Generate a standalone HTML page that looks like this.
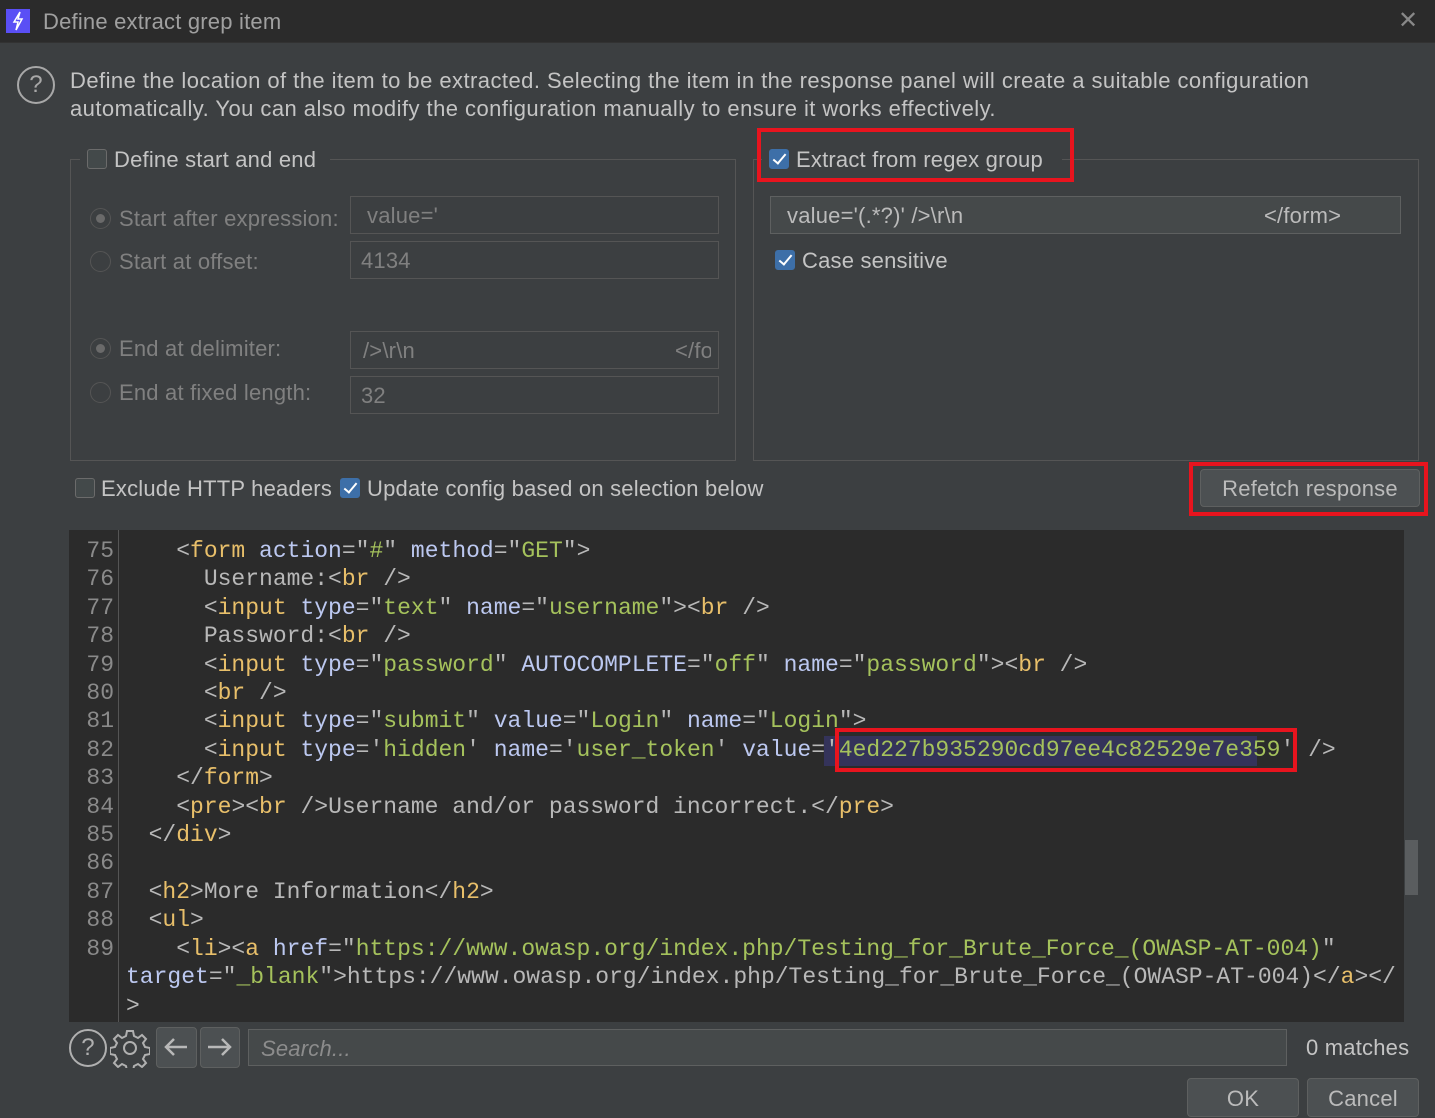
<!DOCTYPE html>
<html><head><meta charset="utf-8"><style>
*{box-sizing:border-box;margin:0;padding:0}
body{width:1435px;height:1117px;background:#3c3f41;font-family:"Liberation Sans",sans-serif;color:#bbbbbb;position:relative;overflow:hidden;font-size:22px;letter-spacing:0.2px}
.a{position:absolute;white-space:nowrap}
.title{left:0;top:0;width:1435px;height:43px;background:#2b2b2b;border-bottom:1px solid #323232}
.fld{position:absolute;border:1px solid #5e6060;background:#45494a;height:38px;padding:0 16px;line-height:38px;color:#bbbbbb}
.dis{color:#808080;background:#3c3f41;border-color:#555}
.cb{position:absolute;width:20px;height:20px;border:1px solid #6b6b6b;border-radius:3px;background:#43494a}
.cb.on{background:#3d6fa8;border-color:#3d6fa8}
.cb.on:after{content:"";position:absolute;left:6px;top:1px;width:5px;height:11px;border:solid #fff;border-width:0 2.5px 2.5px 0;transform:rotate(40deg)}
.rad{position:absolute;width:21px;height:21px;border-radius:50%;border:1px solid #555;background:#3c3f41}
.rad.on:after{content:"";position:absolute;left:5px;top:5px;width:9px;height:9px;border-radius:50%;background:#6a6a6a}
.grp{position:absolute;border:1px solid #555}
.red{position:absolute;border:4px solid #e8141e}
.btn{position:absolute;border:1px solid #5e6060;background:#4c5052;border-radius:4px;text-align:center;color:#bbbbbb}
.code{position:absolute;left:69px;top:530px;width:1335px;height:492px;background:#2b2b2b;overflow:hidden;font-family:"Liberation Mono",monospace;font-size:23px;color:#a9b7c6;letter-spacing:0}
.gut{position:absolute;left:0;top:0;width:50px;height:492px;border-right:1px solid #555}
.ln{position:absolute;left:0;width:45px;text-align:right;color:#8a8a8a}
.cl{position:absolute;left:52px;white-space:pre;color:#b8b8b8}
.t{color:#e8bf6a}.n{color:#bcc8f0}.s{color:#a5c25c}
</style></head><body>
<div class="a title"></div>
<div class="a" style="left:6px;top:9px;width:24px;height:24px;background:#5a4ff5"></div>
<svg class="a" style="left:6px;top:9px" width="24" height="24"><path d="M14 3 L8 13 L12 13 L10 21 L16 10 L12 10 Z" fill="none" stroke="#fff" stroke-width="1.5"/></svg>
<div class="a" style="left:43px;top:9px;color:#a0a0a0;font-size:22px">Define extract grep item</div>
<div class="a" style="left:1398px;top:6px;color:#888;font-size:24px">✕</div>

<div class="a" style="left:17px;top:66px;width:38px;height:38px;border:2px solid #a8a8a8;border-radius:50%;text-align:center;line-height:34px;font-size:24px;color:#a8a8a8">?</div>
<div class="a" style="left:70px;top:67px;line-height:28px;color:#c4c4c4;letter-spacing:0.45px">Define the location of the item to be extracted. Selecting the item in the response panel will create a suitable configuration<br>automatically. You can also modify the configuration manually to ensure it works effectively.</div>

<div class="grp" style="left:70px;top:159px;width:666px;height:302px"></div>
<div class="a" style="left:80px;top:145px;width:250px;height:30px;background:#3c3f41"></div>
<div class="cb" style="left:87px;top:149px"></div>
<div class="a" style="left:114px;top:147px;color:#c4c4c4">Define start and end</div>
<div class="rad on" style="left:90px;top:208px"></div>
<div class="a" style="left:119px;top:206px;color:#808080">Start after expression:</div>
<div class="fld dis" style="left:350px;top:196px;width:369px">value='</div>
<div class="rad" style="left:90px;top:251px"></div>
<div class="a" style="left:119px;top:249px;color:#808080">Start at offset:</div>
<div class="fld dis" style="left:350px;top:241px;width:369px;padding-left:10px">4134</div>
<div class="rad on" style="left:90px;top:338px"></div>
<div class="a" style="left:119px;top:336px;color:#808080">End at delimiter:</div>
<div class="fld dis" style="left:350px;top:331px;width:369px;padding-left:12px">/&gt;\r\n<span style="position:absolute;left:324px;overflow:hidden;width:36px">&lt;/fo</span></div>
<div class="rad" style="left:90px;top:382px"></div>
<div class="a" style="left:119px;top:380px;color:#808080">End at fixed length:</div>
<div class="fld dis" style="left:350px;top:376px;width:369px;padding-left:10px">32</div>

<div class="grp" style="left:753px;top:159px;width:666px;height:302px"></div>
<div class="a" style="left:762px;top:145px;width:300px;height:30px;background:#3c3f41"></div>
<div class="cb on" style="left:769px;top:149px"></div>
<div class="a" style="left:796px;top:147px;color:#c4c4c4">Extract from regex group</div>
<div class="red" style="left:757px;top:128px;width:317px;height:54px"></div>
<div class="fld" style="left:770px;top:196px;width:631px">value='(.*?)' /&gt;\r\n<span style="position:absolute;left:493px">&lt;/form&gt;</span></div>
<div class="cb on" style="left:775px;top:250px"></div>
<div class="a" style="left:802px;top:248px;color:#c4c4c4">Case sensitive</div>

<div class="cb" style="left:75px;top:478px"></div>
<div class="a" style="left:101px;top:476px;color:#c4c4c4">Exclude HTTP headers</div>
<div class="cb on" style="left:340px;top:478px"></div>
<div class="a" style="left:367px;top:476px;color:#c4c4c4">Update config based on selection below</div>
<div class="btn" style="left:1200px;top:469px;width:220px;height:38px;line-height:37px">Refetch response</div>
<div class="red" style="left:1189px;top:462px;width:239px;height:54px"></div>

<div class="code">
<div class="gut"></div>
<div class="ln" style="top:8px">75</div><div class="ln" style="top:36px">76</div><div class="ln" style="top:65px">77</div><div class="ln" style="top:93px">78</div><div class="ln" style="top:122px">79</div><div class="ln" style="top:150px">80</div><div class="ln" style="top:178px">81</div><div class="ln" style="top:207px">82</div><div class="ln" style="top:235px">83</div><div class="ln" style="top:264px">84</div><div class="ln" style="top:292px">85</div><div class="ln" style="top:320px">86</div><div class="ln" style="top:349px">87</div><div class="ln" style="top:377px">88</div><div class="ln" style="top:406px">89</div>
<div class="cl" style="top:8px">    &lt;<span class="t">form</span> <span class="n">action</span>="<span class="s">#</span>" <span class="n">method</span>="<span class="s">GET</span>"&gt;</div>
<div class="cl" style="top:36px">      Username:&lt;<span class="t">br</span> /&gt;</div>
<div class="cl" style="top:65px">      &lt;<span class="t">input</span> <span class="n">type</span>="<span class="s">text</span>" <span class="n">name</span>="<span class="s">username</span>"&gt;&lt;<span class="t">br</span> /&gt;</div>
<div class="cl" style="top:93px">      Password:&lt;<span class="t">br</span> /&gt;</div>
<div class="cl" style="top:122px">      &lt;<span class="t">input</span> <span class="n">type</span>="<span class="s">password</span>" <span class="n">AUTOCOMPLETE</span>="<span class="s">off</span>" <span class="n">name</span>="<span class="s">password</span>"&gt;&lt;<span class="t">br</span> /&gt;</div>
<div class="cl" style="top:150px">      &lt;<span class="t">br</span> /&gt;</div>
<div class="cl" style="top:178px">      &lt;<span class="t">input</span> <span class="n">type</span>="<span class="s">submit</span>" <span class="n">value</span>="<span class="s">Login</span>" <span class="n">name</span>="<span class="s">Login</span>"&gt;</div>
<div class="a" style="left:755px;top:206px;width:433px;height:30px;background:#34335a"></div>
<div class="cl" style="top:207px">      &lt;<span class="t">input</span> <span class="n">type</span>='<span class="s">hidden</span>' <span class="n">name</span>='<span class="s">user_token</span>' <span class="n">value</span>='<span class="s">4ed227b935290cd97ee4c82529e7e359</span>' /&gt;</div>
<div class="cl" style="top:235px">    &lt;/<span class="t">form</span>&gt;</div>
<div class="cl" style="top:264px">    &lt;<span class="t">pre</span>&gt;&lt;<span class="t">br</span> /&gt;Username and/or password incorrect.&lt;/<span class="t">pre</span>&gt;</div>
<div class="cl" style="top:292px">  &lt;/<span class="t">div</span>&gt;</div>
<div class="cl" style="top:349px">  &lt;<span class="t">h2</span>&gt;More Information&lt;/<span class="t">h2</span>&gt;</div>
<div class="cl" style="top:377px">  &lt;<span class="t">ul</span>&gt;</div>
<div class="cl" style="top:406px">    &lt;<span class="t">li</span>&gt;&lt;<span class="t">a</span> <span class="n">href</span>="<span class="s">https://www.owasp.org/index.php/Testing_for_Brute_Force_(OWASP-AT-004)</span>"</div>
<div class="cl" style="top:434px;left:57px"><span class="n">target</span>="<span class="s">_blank</span>"&gt;https://www.owasp.org/index.php/Testing_for_Brute_Force_(OWASP-AT-004)&lt;/<span class="t">a</span>&gt;&lt;/</div>
<div class="cl" style="top:463px;left:57px">&gt;</div>
</div>
<div class="a" style="left:1404px;top:530px;width:15px;height:492px;background:#3c3f41"></div>
<div class="a" style="left:1405px;top:840px;width:13px;height:55px;background:#5a5d5f"></div>
<div class="red" style="left:835px;top:728px;width:462px;height:44px"></div>

<div class="a" style="left:69px;top:1029px;width:38px;height:38px;border:2px solid #b0b0b0;border-radius:50%;text-align:center;line-height:34px;font-size:24px;color:#b0b0b0">?</div>
<svg class="a" style="left:110px;top:1028px" width="40" height="40" viewBox="0 0 40 40"><path d="M17 3h6l1 5 4 2 4-3 4 4-3 4 2 4 5 1v6l-5 1-2 4 3 4-4 4-4-3-4 2-1 5h-6l-1-5-4-2-4 3-4-4 3-4-2-4-5-1v-6l5-1 2-4-3-4 4-4 4 3 4-2z" fill="none" stroke="#b0b0b0" stroke-width="2"/><circle cx="20" cy="20" r="6" fill="none" stroke="#b0b0b0" stroke-width="2"/></svg>
<div class="btn" style="left:156px;top:1027px;width:41px;height:41px"></div>
<svg class="a" style="left:156px;top:1027px" width="41" height="41"><path d="M31 20H10M18 12l-8 8 8 8" fill="none" stroke="#b8b8b8" stroke-width="2.5"/></svg>
<div class="btn" style="left:200px;top:1027px;width:40px;height:41px"></div>
<svg class="a" style="left:200px;top:1027px" width="40" height="41"><path d="M8 20h21M22 12l8 8-8 8" fill="none" stroke="#b8b8b8" stroke-width="2.5"/></svg>
<div class="fld" style="left:248px;top:1029px;width:1039px;height:37px;font-style:italic;color:#8c8c8c;padding-left:12px;line-height:37px">Search...</div>
<div class="a" style="left:1306px;top:1035px;color:#c4c4c4">0 matches</div>
<div class="btn" style="left:1187px;top:1078px;width:112px;height:39px;line-height:39px">OK</div>
<div class="btn" style="left:1307px;top:1078px;width:112px;height:39px;line-height:39px">Cancel</div>
</body></html>
